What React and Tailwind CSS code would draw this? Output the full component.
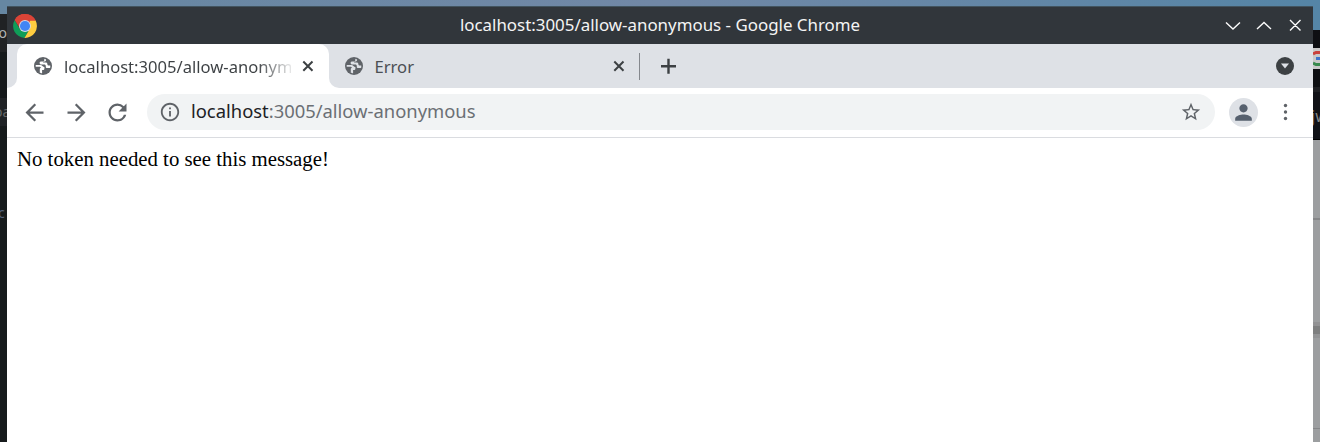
import { MdArrowBack, MdArrowForward, MdRefresh, MdInfoOutline, MdStarBorder, MdPerson } from "react-icons/md";

function ChromeLogo() {
  return (
    <svg className="ml-[5px] h-[26px] w-[26px] shrink-0" viewBox="0 0 48 48">
      <path d="M24 24 4.950 13A22 22 0 0 1 43.600 14z" fill="#db4437" />
      <path d="M4.950 13 14.500 29.500 24 34l8.700-5L23 46A22 22 0 0 1 4.950 13z" fill="#0f9d58" />
      <path d="M43.600 14A22 22 0 0 1 23 46l10-17V14z" fill="#ffcd40" />
      <path d="M5 13 15 29l9-6 10-9h9.600A22 22 0 0 0 5 13z" fill="#db4437" />
      <circle cx="24" cy="24" r="11" fill="#d8dce6" />
      <circle cx="24" cy="24" r="9.300" fill="#4285f4" />
    </svg>
  );
}

function Globe() {
  return (
    <svg className="h-[18px] w-[18px] shrink-0" viewBox="0 0 18 18">
      <circle cx="9" cy="9" r="9" fill="#5f6368" />
      <path d="M10.300 1.800v1.100c0 1-.7 1.600-1.700 1.600H7.200c-1 0-1.600.6-1.600 1.400 0 .9.7 1.500 1.600 1.500h3.100c.9 0 1.500.6 1.500 1.500v1c0 .7.5 1.100 1.200 1.100h3.100c.3-1 .3-1.500.1-2.400h-1.800c-.9 0-1-.9-1-1.500 0-.9-.7-1.500-1.600-1.500H9.100c0-1.100.8-1 1.800-1.200.8-.2 1.200-.7 1.200-1.900z" fill="currentColor" />
      <path d="M1.700 8h4.700c1.800 0 2.400 1.900 4 2.100v1.600c0 .9-.7 1.400-1.500 1.400h-.8v3.100c-1.200 0-2-.3-2.300-.5v-3.500c0-.8.6-1.400 1.400-1.400L5.900 9.800H1.700z" fill="currentColor" />
    </svg>
  );
}

function CloseIcon() {
  return (
    <svg className="h-[18px] w-[18px] shrink-0" viewBox="0 0 18 18" fill="none" stroke="#3c4043" strokeWidth="2">
      <path d="m4.300 4.500 9.200 9.200M13.500 4.500l-9.200 9.200" />
    </svg>
  );
}

function TitleBar() {
  return (
    <header className="grid h-[38px] shrink-0 grid-cols-[1fr_auto_1fr] items-center border-t border-[#42545f] bg-[#31363b]">
      <ChromeLogo />
      <h1 className="whitespace-nowrap text-[16.9px] leading-none text-[#f4f4f4]">localhost:3005/allow-anonymous - Google Chrome</h1>
      <svg className="h-[20px] w-[90px] justify-self-end" viewBox="0 0 90 20" fill="none" stroke="#fcfcfc" strokeWidth="1.4">
        <path d="m3 6.500 7 6.500 7-6.500M34 13l7-6.500 7 6.500M67 4l10.500 10.500M77.500 4 67 14.500" />
      </svg>
    </header>
  );
}

function TabStrip() {
  return (
    <nav className="flex h-[44px] shrink-0 bg-[#dee1e6] text-[16.600px] text-[#3c4043]">
      <div className="w-[10px] bg-white"><div className="h-full rounded-br-[10px] bg-[#dee1e6]" /></div>
      <div className="flex w-[312px] items-center rounded-t-[10px] bg-white pl-[17px] pr-[12px] text-white">
        <Globe />
        <span className="ml-[12px] w-[227px] overflow-hidden whitespace-nowrap bg-linear-to-r from-[#3c4043] from-85% to-[#3c404320] bg-clip-text pt-[2px] text-transparent">localhost:3005/allow-anonymous</span>
        <div className="ml-[8px]"><CloseIcon /></div>
      </div>
      <div className="bg-white">
        <div className="flex h-full w-[310px] items-center rounded-bl-[10px] bg-[#dee1e6] pl-[16px] pr-[11px] text-[#dee1e6]">
          <Globe />
          <span className="ml-[11.500px] flex-1 pt-[2px] text-[#4b4f54]">Error</span>
          <CloseIcon />
        </div>
      </div>
      <div className="mt-[9px] h-[27px] w-px bg-[#85888d]" />
      <svg className="ml-[20px] h-[16px] w-[17px] self-center" viewBox="0 0 17 16" stroke="#3c4043" strokeWidth="2.400"><path d="M1 8.300h15M8.500.8v15" /></svg>
      <div className="ml-auto mr-[19px] flex h-[18px] w-[18px] items-center justify-center self-center rounded-full bg-[#3c4043]">
        <svg className="h-[6px] w-[8px]" viewBox="0 0 8 6"><path d="M0 .5h8L4 5.500z" fill="#dee1e6" /></svg>
      </div>
    </nav>
  );
}

function Toolbar() {
  return (
    <div className="flex h-[50px] shrink-0 items-center border-b border-[#dadce0] pb-[1px] text-[#5f6368]">
      <MdArrowBack className="ml-[14px]" size={27} />
      <MdArrowForward className="ml-[15px]" size={27} />
      <MdRefresh className="ml-[14px]" size={27} />
      <div className="ml-[16px] flex h-[36px] w-[1068px] items-center rounded-full bg-[#f1f3f4] pl-[12px] pr-[13px]">
        <MdInfoOutline size={22} />
        <span className="ml-[10px] flex-1 whitespace-nowrap pb-[2px] text-[18.400px]"><span className="text-[#202124]">localhost</span><span className="text-[#6b6f74]">:3005/allow-anonymous</span></span>
        <MdStarBorder size={22} />
      </div>
      <div className="ml-[14px] flex h-[29px] w-[29px] items-center justify-center rounded-full bg-[#dee1e6]">
        <MdPerson className="text-[#56606e]" size={25} />
      </div>
      <svg className="ml-[25px] h-[18px] w-[5px]" viewBox="0 0 5 18" fill="currentColor">
        <circle cx="2.500" cy="2.500" r="1.700" />
        <circle cx="2.500" cy="9" r="1.700" />
        <circle cx="2.500" cy="15.500" r="1.700" />
      </svg>
    </div>
  );
}

function LeftBackdrop() {
  return (
    <div className="flex w-[7px] shrink-0 flex-col overflow-hidden bg-[#171b1c] text-[14px] leading-none text-[#858585]">
      <div className="h-[14px] shrink-0 bg-[#6687a2]" />
      <div className="flex h-[38px] shrink-0 items-center justify-end bg-[#202224] text-[#b0b2b4]">o</div>
      <div className="h-[46px] shrink-0 bg-[#15191b]" />
      <div className="flex h-[28px] shrink-0 items-center bg-[#202326] text-[#66686a]"><span className="-ml-[6px]">oa</span></div>
      <div className="-ml-[2px] mt-[80px] text-[#56657c]">c</div>
    </div>
  );
}

function RightBackdrop() {
  return (
    <div className="flex w-[7px] shrink-0 flex-col overflow-hidden bg-[#9c9ea0]">
      <div className="h-[30px] shrink-0 bg-[#5585a6]" />
      <div className="h-[18px] shrink-0 bg-[#0e0f13]" />
      <svg className="h-[21px] w-[7px] shrink-0 bg-[#c9c9c9]" viewBox="0 0 7 21">
        <path d="M0 6 3 4.500h4" stroke="#c9413d" strokeWidth="3" fill="none" />
        <path d="M3 10.500h4" stroke="#3e73cc" strokeWidth="3" />
        <path d="m0 15 3 1.500h4" stroke="#388a4d" strokeWidth="3" fill="none" />
      </svg>
      <div className="h-[18px] shrink-0 bg-[#0e0f13]" />
      <div className="h-[5px] shrink-0 bg-[#1e1f23]" />
      <div className="flex h-[48px] shrink-0 items-center overflow-hidden border-b border-black bg-[#111217] text-[16px] leading-none text-[#858687]"><span className="-ml-[2px] text-[#8c744d]">j</span>w</div>
      <div className="h-[78px] shrink-0" />
      <div className="h-[2px] shrink-0 bg-[#858688]" />
      <div className="h-[102px] shrink-0" />
      <div className="h-[4px] shrink-0 bg-[#929294]" />
      <div className="h-[8px] shrink-0 bg-[#7e7f80]" />
      <div className="h-[4px] shrink-0 bg-[#939496]" />
      <div className="h-[90px] shrink-0" />
      <div className="h-px shrink-0 bg-[#858688]" />
    </div>
  );
}

export default function App() {
  return (
    <div className="flex h-[442px] w-[1320px] overflow-hidden bg-white font-['Noto_Sans',sans-serif]">
      <LeftBackdrop />
      <div className="flex w-[1306px] shrink-0 flex-col">
        <div className="h-[6px] shrink-0 bg-linear-to-r from-[#6687a2] via-[#7188a6] to-[#5585a6]" />
        <TitleBar />
        <TabStrip />
        <Toolbar />
        <main className="flex-1 bg-white px-[10px] pt-[9px] font-['Liberation_Serif',serif] text-[20.8px] leading-[24px] text-black">No token needed to see this message!</main>
      </div>
      <RightBackdrop />
    </div>
  );
}
